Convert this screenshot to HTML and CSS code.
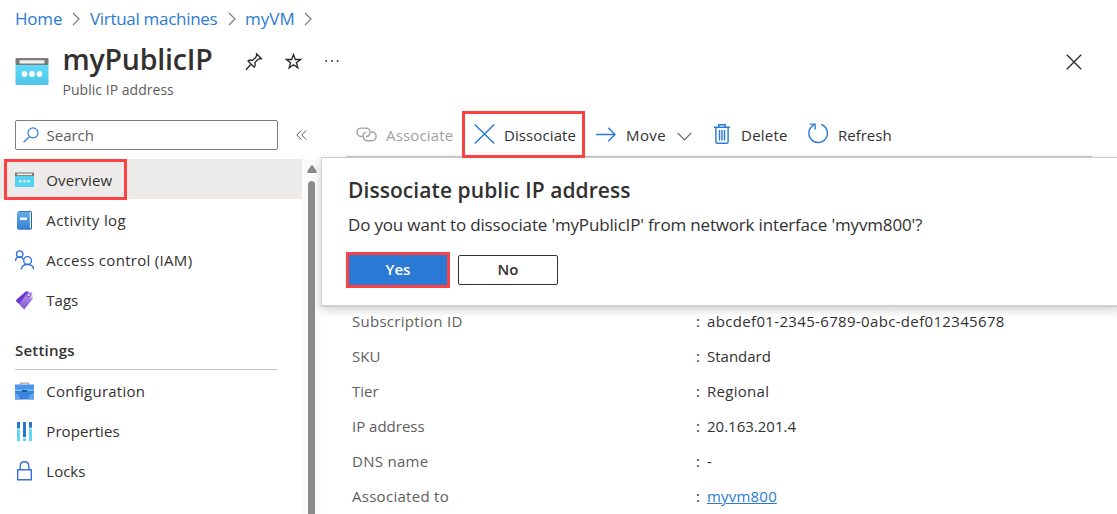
FILE: index.html
```html
<!DOCTYPE html>
<html lang="en">
<head>
<meta charset="utf-8">
<title>myPublicIP</title>
<link rel="stylesheet" href="styles.css">
</head>
<body>
<div class="app">
  <header class="top">
    <nav class="crumbs">
      <a class="crumb home">Home</a>
      <svg class="sep" width="8" height="14" viewBox="0 0 8 14"><path d="M1 1l6 6-6 6"/></svg>
      <a class="crumb vms">Virtual machines</a>
      <svg class="sep" width="8" height="14" viewBox="0 0 8 14"><path d="M1 1l6 6-6 6"/></svg>
      <a class="crumb vm">myVM</a>
      <svg class="sep" width="8" height="14" viewBox="0 0 8 14"><path d="M1 1l6 6-6 6"/></svg>
    </nav>
    <div class="heading">
      <svg class="logo" width="34" height="28" viewBox="0 0 34 28">
        <defs><linearGradient id="sky" x1="0" y1="0" x2="0" y2="1"><stop offset="0" stop-color="#5ddcfb"/><stop offset="1" stop-color="#50c4e8"/></linearGradient></defs>
        <path d="M.5 7h33v19a1 1 0 0 1-1 1h-31a1 1 0 0 1-1-1z" fill="url(#sky)"/>
        <path d="M1.500 0h31a1 1 0 0 1 1 1v6H.5V1a1 1 0 0 1 1-1z" fill="#7b7b7b"/>
        <rect x="4.500" y="2.200" width="25" height="3.400" rx=".8" fill="#f2f2f2"/>
        <g fill="#fafafa"><circle cx="9.500" cy="16" r="2.900"/><circle cx="17" cy="16" r="2.900"/><circle cx="24.500" cy="16" r="2.900"/></g>
      </svg>
      <div class="titles">
        <h1 class="title">myPublicIP</h1>
        <div class="subtitle">Public IP address</div>
      </div>
      <div class="title-actions">
        <svg width="18" height="19" viewBox="0 0 18 19"><path d="M11 1.200l6 6M12 2l-1.100 3.200-3.500 3.300c-1.800-.8-3.400-.5-4.400.4l6.300 6.300c1-1.200 1.200-2.700.4-4.400l3.400-3.500L16.300 6.300M6.100 12L1 17.800" class="ink"/></svg>
        <svg width="17" height="17" viewBox="0 0 17 17"><path d="M8.500 1.500l1.800 5h5.200l-4.100 3.200 1.500 5.200-4.400-3.100-4.400 3.100 1.500-5.200L1.500 6.500h5.200z" class="ink"/></svg>
        <svg width="14" height="4" viewBox="0 0 14 4" fill="#333"><circle cx="1.200" cy="2" r=".95"/><circle cx="6.900" cy="2" r=".95"/><circle cx="12.600" cy="2" r=".95"/></svg>
      </div>
      <svg class="close" width="16" height="16" viewBox="0 0 16 16"><path d="M.8.800l14.400 14.400M15.200.8L.8 15.200" class="ink"/></svg>
    </div>
  </header>

  <div class="body">
    <aside class="side">
      <div class="search-row">
        <div class="search">
          <svg width="16" height="16" viewBox="0 0 16 16"><path d="M6.300 9.700L.6 15.300" class="blue"/><circle cx="10" cy="5.900" r="5" class="blue"/></svg>
          <span class="search-text">Search</span>
        </div>
        <svg class="collapse" width="11" height="10" viewBox="0 0 11 10"><path d="M5.300.5L.8 5l4.500 4.500M10.200.5L5.700 5l4.500 4.500"/></svg>
      </div>
      <div class="nav-wrap">
        <ul class="nav">
          <li class="item selected">
            <svg class="icon" width="19" height="19" viewBox="0 0 19 19"><path d="M0 5h19v11H0z" fill="#54d2f3"/><path d="M0 1.500h19V5H0z" fill="#7b7b7b"/><path d="M2 2.600h15v1.500H2z" fill="#f2f2f2"/><g fill="#eefaff"><circle cx="5.500" cy="10.200" r="1.300"/><circle cx="9.500" cy="10.200" r="1.300"/><circle cx="13.500" cy="10.200" r="1.300"/></g></svg>
            <span class="t-overview">Overview</span>
          </li>
          <li class="item">
            <svg class="icon" width="19" height="19" viewBox="0 0 19 19"><defs><linearGradient id="book" x1="0" y1="0" x2="0" y2="1"><stop offset="0" stop-color="#62adea"/><stop offset="1" stop-color="#347fce"/></linearGradient></defs><rect x="3" y="0" width="14" height="18.500" rx="1.500" fill="#2865a7"/><rect x="3.800" y="1" width="12.200" height="16" rx=".5" fill="#f0f4fa"/><path d="M3.500.8h11.300v17.700H3.500a1.500 1.500 0 0 1-1.500-1.500V2.300A1.500 1.500 0 0 1 3.500.8z" fill="url(#book)"/><path d="M5 6.500h7v2.500H5z" fill="#fff"/></svg>
            <span class="t-activity">Activity log</span>
          </li>
          <li class="item">
            <svg class="icon" width="19" height="20" viewBox="0 0 19 20"><g fill="none" stroke="#336fdc" stroke-width="1.350"><circle cx="4.700" cy="4" r="3.200"/><path d="M.6 11c0-5.300 6.400-5.200 7.600-1.500"/><circle cx="12.600" cy="10.500" r="3.900"/><path d="M6.300 19.500c.6-6.700 11.800-6.700 12.400 0"/></g></svg>
            <span class="t-access">Access control (IAM)</span>
          </li>
          <li class="item">
            <svg class="icon" width="19" height="19" viewBox="0 0 19 19"><defs><linearGradient id="tag" x1="0" y1="0" x2="0" y2="1"><stop offset="0" stop-color="#c3a0f3"/><stop offset="1" stop-color="#7953ce"/></linearGradient></defs><path d="M10.800.5l5 .4a1.500 1.500 0 0 1 1.300 1.400l.5 5.800-8.400 10.400L1.300 10.200z" fill="url(#tag)"/><path d="M10.800.5l2.800.2-9.500 12L1.300 10.200c-.4-.4-.3-1 .1-1.400z" fill="#6d35d0"/><circle cx="13.700" cy="4.800" r="2" fill="#7a4bd0"/><circle cx="13.700" cy="4.300" r="1.050" fill="#fff"/><path d="M14.800 6.500c1.300.7 2.100-.4 1.400-2" fill="none" stroke="#fff"/></svg>
            <span class="t-tags">Tags</span>
          </li>
        </ul>
        <h2 class="group">Settings</h2>
        <ul class="nav">
          <li class="item">
            <svg class="icon" width="19" height="18" viewBox="0 0 19 18"><path d="M5.500 3V1.200h8V3" fill="none" stroke="#a5a5a5" stroke-width="1.200"/><path d="M0 2.500h19V8H0z" fill="#4b94ea"/><path d="M0 7.500h19v1.400H0z" fill="#6dc7f4"/><path d="M0 8.900h19v8.600H0z" fill="#3a84de"/><path d="M0 11.500c4 0 5 3 5 6H0zM19 11c-4 1-6 2.500-5 6.500h5z" fill="#62a4ed"/><path d="M7 8h5v2H7z" fill="#185aa5"/></svg>
            <span class="t-config">Configuration</span>
          </li>
          <li class="item">
            <svg class="icon" width="19" height="19" viewBox="0 0 19 19"><path d="M2 0h3v19H2zM14 0h3v19h-3z" fill="#61d8f3"/><path d="M2 0h3v6.500H2zM14 0h3v6H14zM8 0h3v15H8z" fill="#2878cd"/><path d="M2 6.500h3v1.300H2zM14 5.800h3v1.300h-3zM8 15h3v1.300H8z" fill="#ddebf0"/><path d="M8 16.300h3V19H8z" fill="#61d8f3"/></svg>
            <span class="t-props">Properties</span>
          </li>
          <li class="item">
            <svg class="icon" width="19" height="20" viewBox="0 0 19 20"><g fill="none" stroke="#3972dc" stroke-width="1.400"><path d="M2.700 8.700h13.600v10H2.700z"/><path d="M5.200 8.500V5.400c0-6.200 8.600-6.200 8.600 0v3.100"/></g></svg>
            <span class="t-locks">Locks</span>
          </li>
        </ul>
        <div class="scroll"><svg width="10" height="8" viewBox="0 0 10 8"><path d="M3.800 1Q5-.6 6.200 1L10 6.500Q10 8 8.500 8h-7Q0 8 0 6.500z" fill="#8a8a8a"/></svg><i class="thumb"></i></div>
      </div>
    </aside>

    <main class="main">
      <div class="toolbar">
        <button class="cmd associate">
          <svg width="21" height="15" viewBox="0 0 21 15"><g fill="none" stroke="#a3a3a3" stroke-width="1.400"><path d="M6.500 9.500H5.200a4.200 4.200 0 0 1 0-8.400h4.600c5.500 0 5.500 8.300.2 8.400"/><path d="M14.800 5h1a4.200 4.200 0 0 1 0 8.700h-4.600C6 13.500 6 5.600 10.300 5.100"/></g></svg>
          <span>Associate</span></button>
        <button class="cmd dissociate">
          <svg width="21" height="20" viewBox="0 0 21 20"><path d="M.8.500l19.400 19M20.200.5L.8 19.500" class="blue bold"/></svg>
          <span>Dissociate</span></button>
        <button class="cmd move">
          <svg width="20" height="15" viewBox="0 0 20 15"><path d="M0 7.500h19M12.300.8L19 7.500l-6.700 6.700" class="blue bold"/></svg>
          <span>Move</span>
          <svg class="chev" width="15" height="9" viewBox="0 0 15 9"><path d="M.7.800l6.800 7 6.800-7" fill="none" stroke="#666" stroke-width="1.200"/></svg></button>
        <button class="cmd delete">
          <svg width="16" height="20" viewBox="0 0 16 20"><path d="M0 3.200h16M4.800 3V.8h6.400V3M1.900 3.500v14.200c0 1 .5 1.500 1.500 1.500h9.200c1 0 1.500-.5 1.500-1.500V3.500M5.500 6v10.500M8 6v10.500M10.500 6v10.500" class="blue bold"/></svg>
          <span>Delete</span></button>
        <button class="cmd refresh">
          <svg width="20" height="21" viewBox="0 0 20 21"><path d="M13.200 1.500a9.300 9.300 0 1 1-7.500.6M1.600 1.100h5.500v5.300" class="blue bold"/></svg>
          <span>Refresh</span></button>
      </div>
      <section class="dialog">
        <h2 class="dialog-title">Dissociate public IP address</h2>
        <p class="dialog-text">Do you want to dissociate 'myPublicIP' from network interface 'myvm800'?</p>
        <div class="buttons"><button class="btn yes">Yes</button><button class="btn no">No</button></div>
      </section>
      <dl class="props">
        <dt class="wide">Subscription ID</dt><dd><i>:</i><span class="v-sub">abcdef01-2345-6789-0abc-def012345678</span></dd>
        <dt>SKU</dt><dd><i>:</i><span>Standard</span></dd>
        <dt>Tier</dt><dd><i>:</i><span class="wide">Regional</span></dd>
        <dt>IP address</dt><dd><i>:</i><span>20.163.201.4</span></dd>
        <dt class="wide">DNS name</dt><dd><i>:</i><span>-</span></dd>
        <dt class="wide">Associated to</dt><dd><i>:</i><a class="link">myvm800</a></dd>
      </dl>
    </main>
  </div>
</div>
</body>
</html>
```
FILE: styles.css
```css
*, *::after { box-sizing: border-box; }
body { margin: 0; background: #fff; color: #323130; font: 15px/20px "Open Sans", "Noto Sans", sans-serif; }
h1, h2, p, ul, dl, dd { margin: 0; padding: 0; }
svg { display: block; flex: none; }
i { font-style: normal; }
button { font: inherit; color: inherit; background: none; border: 0; padding: 0; }
.app { width: 1117px; height: 514px; overflow: hidden; display: flex; flex-direction: column; }
.ink { fill: none; stroke: #292827; stroke-width: 1.3; }
.blue { fill: none; stroke: #2b7cd8; stroke-width: 1.2; }
.bold { stroke-width: 1.45; }
.wide { letter-spacing: .28px; }

.top { height: 110px; flex: none; }
.crumbs { display: flex; align-items: center; height: 38px; padding-left: 15px; font-size: 17px; color: #2a7ad5; }
.crumb { white-space: nowrap; }
.home { width: 57px; letter-spacing: -.2px; }
.vms { width: 138px; margin-left: 10px; letter-spacing: -.3px; }
.vm { width: 59px; margin-left: 9px; letter-spacing: 0; }
.sep path { fill: none; stroke: #7b7b7b; stroke-width: 1.2; }
.heading { display: flex; padding-left: 15px; height: 72px; }
.logo { margin-top: 20px; }
.titles { width: 182px; margin-left: 13.500px; }
.title { font-size: 28.5px; line-height: 43px; font-weight: 600; letter-spacing: -.2px; }
.subtitle { font-size: 14px; line-height: 18px; color: #605e5c; letter-spacing: .03px; }
.title-actions { display: flex; align-items: center; height: 46px; gap: 22.500px; }
.close { margin: 15.500px 35.500px 0 auto; }

.body { display: flex; flex: 1; min-height: 0; }
.side { width: 321px; display: flex; flex-direction: column; flex: none; }
.search-row { height: 49px; flex: none; display: flex; align-items: flex-start; padding: 10px 0 0 15px; }
.search { width: 263px; height: 30px; border: 1px solid #7f7e7c; border-radius: 2px; display: flex; align-items: center; gap: 7.500px; padding-left: 7px; color: #605e5c; }
.collapse { margin: 10px 0 0 18px; fill: none; stroke: #555; stroke-width: 1; }
.nav-wrap { flex: 1; min-height: 0; display: grid; grid-template-columns: 302px 19px; grid-template-rows: 160px 51px 1fr; }
.nav, .group { grid-column: 1; }
.nav { list-style: none; }
.item { height: 40px; display: flex; align-items: center; padding: 1px 0 0 15px; gap: 12px; white-space: nowrap; }
.item span { margin-left: .3px; }
.icon { margin-top: 1px; }
.selected { background: #edebe9; position: relative; }
.selected::after { content: ""; position: absolute; left: 4px; top: 0; width: 123px; height: 41px; border: 3px solid #fb4141; }
.t-overview { letter-spacing: .1px; }
.t-activity { letter-spacing: .42px; }
.t-access { letter-spacing: .3px; }
.t-config { letter-spacing: .25px; }
.t-props { letter-spacing: .08px; }
.group { margin: 0 25px 0 15px; padding-top: 21px; font-size: 15px; font-weight: 600; border-bottom: 1px solid #c8c6c4; letter-spacing: .2px; }
.scroll { grid-column: 2; grid-row: 1 / 4; background: #fbfbfb; display: flex; flex-direction: column; align-items: center; gap: 8px; padding-top: 6px; }
.thumb { width: 7px; flex: 1; background: #8b8b8b; border-radius: 4px 4px 0 0; }

.main { flex: 1; min-width: 0; }
.toolbar { height: 47px; margin: 0 25px 0 25px; border-bottom: 1px solid #c8c6c4; display: flex; align-items: flex-start; }
.cmd { display: flex; align-items: center; height: 49px; white-space: nowrap; flex: none; text-align: left; }
.cmd span { padding-top: 1px; }
.associate { width: 116px; padding-left: 10px; gap: 9px; color: #a19f9d; letter-spacing: .15px; }
.dissociate { width: 123px; height: 47px; margin-top: 1px; border: 3px solid #fb4141; padding-left: 9px; gap: 9px; letter-spacing: .1px; position: relative; z-index: 2; }
.dissociate svg { margin-top: -1px; }
.move { width: 118px; padding-left: 11px; gap: 10px; letter-spacing: .4px; }
.move span { width: 41px; }
.chev { margin-top: 3px; }
.delete { width: 104px; padding-left: 11px; gap: 11px; letter-spacing: .25px; }
.delete svg, .refresh svg { margin-top: -2px; }
.refresh { gap: 10px; margin-left: 1px; }
.dialog { position: relative; z-index: 1; height: 150px; margin-right: -5px; background: #fff; border: 1px solid #d2d0ce; border-bottom-width: 2px; box-shadow: 0 3px 9px rgba(0,0,0,.18); padding: 17px 0 0 26px; }
.dialog-title { font-size: 21px; line-height: 30px; font-weight: 600; letter-spacing: .07px; white-space: nowrap; }
.dialog-text { font-size: 17px; line-height: 24px; margin-top: 8px; letter-spacing: -.17px; white-space: nowrap; }
.buttons { display: flex; gap: 8px; margin: 15px 0 0 -2px; align-items: center; }
.btn { font-weight: 600; line-height: 20px; padding-bottom: 2px; }
.yes { width: 104px; height: 36px; border: 3px solid #fb4141; background: #2979d5; color: #fff; }
.no { width: 100px; height: 30px; border: 1px solid #323130; border-radius: 2px; }
.props { display: grid; grid-template-columns: 344px 1fr; grid-auto-rows: 35px; padding-left: 31px; padding-top: 4px; line-height: 20px; }
.props dt { color: #605e5c; }
.props dd { display: flex; }
.props i { width: 11px; }
.v-sub { letter-spacing: .34px; }
.link { color: #2a7ad5; text-decoration: underline; letter-spacing: .2px; }
```
